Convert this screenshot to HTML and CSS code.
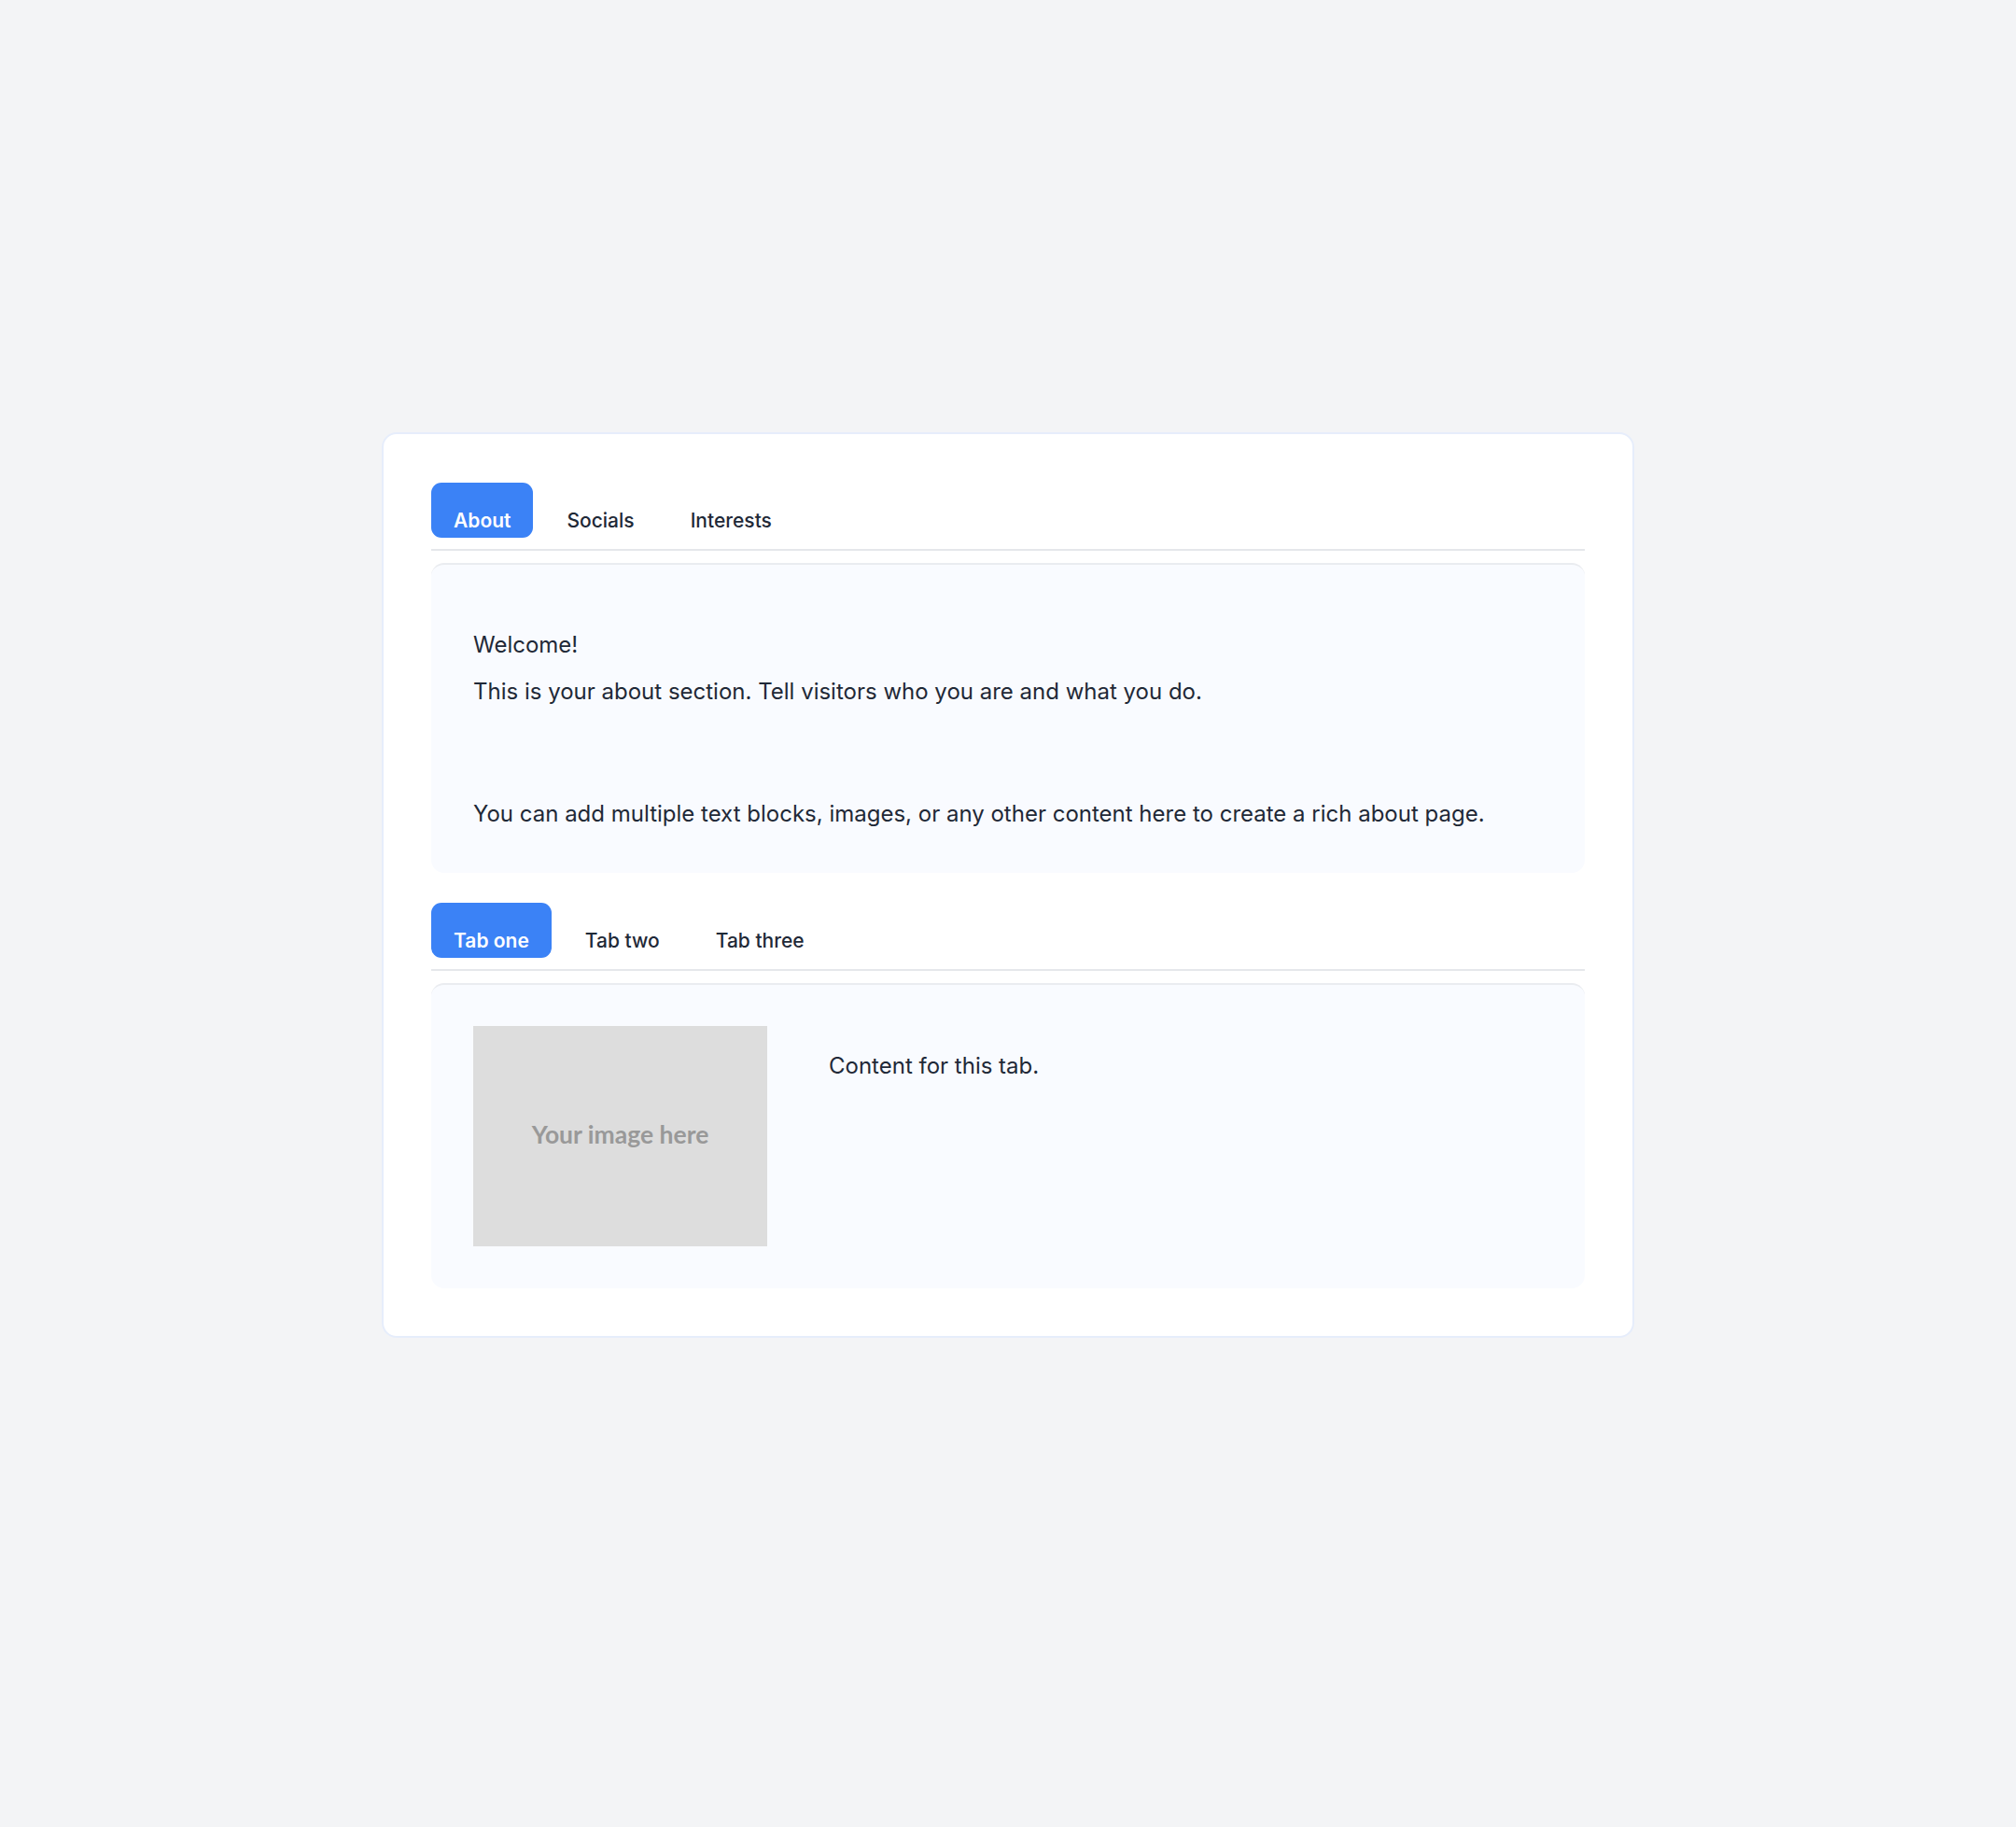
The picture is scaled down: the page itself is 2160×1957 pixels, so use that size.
FILE: index.html
```html
<!DOCTYPE html>
<html lang="en">
<head>
<meta charset="utf-8">
<title>Profile tabs</title>
<link rel="stylesheet" href="styles.css">
</head>
<body>
<main class="page">
  <section class="card">
    <div class="tabs">
      <nav class="tab-list">
        <button class="tab is-active">About</button>
        <button class="tab">Socials</button>
        <button class="tab">Interests</button>
      </nav>
      <div class="panel panel-about">
        <p class="p-first">Welcome!</p>
        <p>This is your about section. Tell visitors who you are and what you do.</p>
        <p class="p-spaced">You can add multiple text blocks, images, or any other content here to create a rich about page.</p>
      </div>
    </div>
    <div class="tabs tabs-second">
      <nav class="tab-list">
        <button class="tab is-active">Tab one</button>
        <button class="tab">Tab two</button>
        <button class="tab">Tab three</button>
      </nav>
      <div class="panel panel-media">
        <div class="placeholder">Your image here</div>
        <p class="media-text">Content for this tab.</p>
      </div>
    </div>
  </section>
</main>
</body>
</html>
```
FILE: styles.css
```css
html, body {
  margin: 0;
  padding: 0;
  background: #f3f4f6;
}
body {
  font-family: Inter, "Noto Sans", "Liberation Sans", sans-serif;
  color: #1f2937;
}
.page {
  display: flex;
  justify-content: center;
  padding-top: 463px;
  min-height: 1957px;
  box-sizing: border-box;
}
.card {
  width: 1342px;
  box-sizing: border-box;
  background: #ffffff;
  border: 2px solid #e6edfb;
  border-radius: 16px;
  padding: 52px 51px 51px;
  align-self: flex-start;
}
.tabs-second {
  margin-top: 32px;
}
.tab-list {
  display: flex;
  gap: 12px;
  padding-bottom: 12px;
  border-bottom: 2px solid #e5e7eb;
}
.tab {
  font-family: inherit;
  font-size: 21px;
  font-weight: 500;
  line-height: 33px;
  color: #1f2937;
  background: transparent;
  border: none;
  border-radius: 11px;
  padding: 24px 24px 2px;
  cursor: pointer;
}
.tab.is-active {
  background: #3b82f6;
  color: #ffffff;
  font-weight: 600;
}
.panel {
  margin-top: 13px;
  background: #f9fbff;
  border-top: 2px solid #eaecf0;
  border-radius: 14px;
  padding: 44px 45px 45px;
}
.panel p {
  margin: 0;
  font-size: 24px;
  line-height: 36px;
}
.panel-about .p-first {
  margin-top: 24px;
}
.panel-about p + p {
  margin-top: 14px;
}
.panel-about .p-spaced {
  margin-top: 95px;
}
.panel-media {
  display: flex;
  align-items: flex-start;
  gap: 66px;
}
.placeholder {
  width: 315px;
  height: 236px;
  box-sizing: border-box;
  padding-bottom: 5px;
  flex: none;
  background: #dddddd;
  color: #999999;
  font-family: Lato, "Liberation Sans", sans-serif;
  font-weight: 700;
  font-size: 26.5px;
  display: flex;
  align-items: center;
  justify-content: center;
}
.media-text {
  margin-top: 25px !important;
}
```
